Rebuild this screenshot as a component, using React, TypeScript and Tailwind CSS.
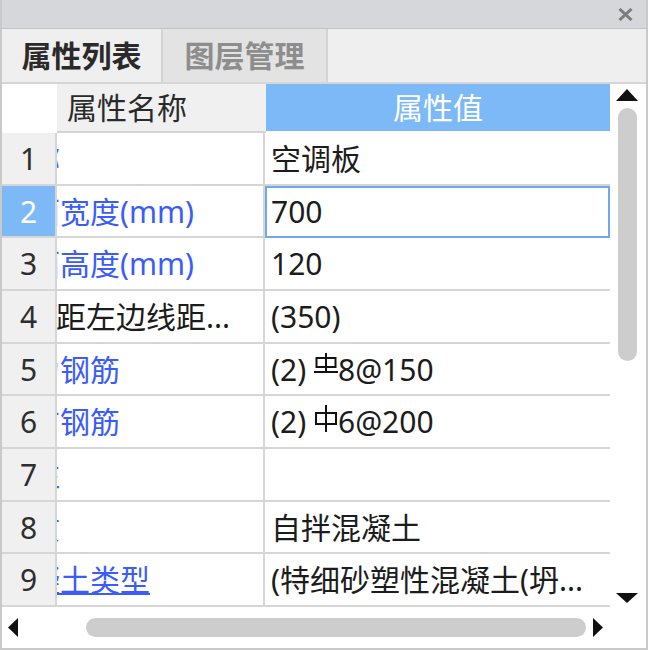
import type { ReactNode } from 'react'

type Row = {
  n: number
  name: string
  shift: boolean
  blue: boolean
  link?: boolean
  value: ReactNode
  h: string
}

function Rebar3() {
  return (
    <svg width="24" height="22" viewBox="0 0 24 22" className="-translate-y-[5px]" fill="none" stroke="#111" strokeWidth="2">
      <path d="M12 0V19" />
      <rect x="2.5" y="5" width="19" height="9" />
      <path d="M0 19H24" />
    </svg>
  )
}

function Rebar1() {
  return (
    <svg width="24" height="27" viewBox="0 0 24 27" className="-translate-y-[3px]" fill="none" stroke="#111" strokeWidth="2">
      <path d="M12 0V27" />
      <rect x="2" y="8" width="20" height="11" />
    </svg>
  )
}

const rows: Row[] = [
  { n: 1, name: '名称', shift: true, blue: true, value: '空调板', h: 'h-[53px]' },
  { n: 2, name: '截面宽度(mm)', shift: true, blue: true, value: '700', h: 'h-[52px]' },
  { n: 3, name: '截面高度(mm)', shift: true, blue: true, value: '120', h: 'h-[53px]' },
  { n: 4, name: '距左边线距...', shift: false, blue: false, value: '(350)', h: 'h-[53px]' },
  {
    n: 5,
    name: '受力钢筋',
    shift: true,
    blue: true,
    value: (
      <>
        <span>(2)&nbsp;</span>
        <Rebar3 />
        <span>8@150</span>
      </>
    ),
    h: 'h-[52px]',
  },
  {
    n: 6,
    name: '分布钢筋',
    shift: true,
    blue: true,
    value: (
      <>
        <span>(2)&nbsp;</span>
        <Rebar1 />
        <span>6@200</span>
      </>
    ),
    h: 'h-[53px]',
  },
  { n: 7, name: '备注', shift: true, blue: true, value: '', h: 'h-[53px]' },
  { n: 8, name: '材质', shift: true, blue: true, value: '自拌混凝土', h: 'h-[52px]' },
  { n: 9, name: '混凝土类型', shift: true, blue: true, link: true, value: '(特细砂塑性混凝土(坍...', h: 'h-[53px]' },
]

export default function App() {
  return (
    <div className="w-[648px] h-[650px] bg-white border-x-2 border-b-2 border-[#c9c9c9] flex flex-col overflow-hidden font-['Noto_Sans','Noto_Sans_CJK_SC',sans-serif] text-[#1c1c1c]">
      {/* title bar */}
      <div className="h-[29px] shrink-0 bg-[#d6d7db] border-b border-[#c2c3c7] flex items-center justify-end pr-[13px]">
        <svg width="15" height="13" viewBox="0 0 15 13" stroke="#7c7c7c" strokeWidth="3">
          <path d="M1.5 1L13.5 12M13.5 1L1.5 12" />
        </svg>
      </div>

      {/* tabs */}
      <div className="h-[55px] shrink-0 bg-[#efefef] border-b-2 border-[#d6d6d6] flex">
        <div className="w-[161px] border-r-2 border-[#d3d3d3] flex items-center justify-center text-[30px] font-bold text-[#2a2a2a]">
          属性列表
        </div>
        <div className="w-[165px] bg-[#e3e3e3] border-r-2 border-[#d3d3d3] flex items-center justify-center text-[30px] font-bold text-[#8d8d8d]">
          图层管理
        </div>
      </div>

      {/* grid + vertical scrollbar */}
      <div className="h-[523px] shrink-0 flex">
        <div className="w-[608px] flex flex-col overflow-hidden">
          <div className="h-[49px] shrink-0 flex">
            <div className="w-[55px] bg-white" />
            <div className="w-[209px] bg-[#f0f0f0] border-b-2 border-[#d4d4d4] flex items-center pl-[10px] text-[30px] text-[#2a2a2a]">
              属性名称
            </div>
            <div className="w-[344px] h-[47px] bg-[#7db9f7] flex items-center justify-center text-[30px] text-white">
              属性值
            </div>
          </div>

          {rows.map((r) => {
            const sel = r.n === 2
            return (
              <div key={r.n} className={`${r.h} shrink-0 flex`}>
                <div
                  className={`w-[55px] border-r-2 border-b-2 border-[#d6d6d6] flex items-center justify-center text-[30px] ${
                    sel ? 'bg-[#7db9f7] text-white' : 'bg-[#f0f0f0] text-[#2e2e2e]'
                  }`}
                >
                  {r.n}
                </div>
                <div className="w-[208px] border-r-2 border-b-2 border-[#d6d6d6] overflow-hidden flex items-center whitespace-nowrap text-[30px]">
                  <span
                    className={`${r.shift ? '-ml-[57px]' : '-ml-[1px]'} ${r.blue ? 'text-[#3a5cfb]' : 'text-[#1c1c1c]'} ${
                      r.link ? 'underline underline-offset-[2px] decoration-2' : ''
                    }`}
                  >
                    {r.name}
                  </span>
                </div>
                <div
                  className={`w-[345px] border-b-2 border-[#d6d6d6] flex items-center whitespace-nowrap overflow-hidden text-[30px] ${
                    sel ? 'pl-[6px] outline-2 -outline-offset-2 outline-[#6ea8ee]' : 'pl-[6px]'
                  }`}
                >
                  {r.value}
                </div>
              </div>
            )
          })}
        </div>

        <div className="w-[36px] flex flex-col items-center pt-[5px] pb-[4px] bg-white">
          <svg width="22" height="12" viewBox="0 0 22 12" className="-translate-x-[1px]">
            <path d="M11 0L22 12H0Z" fill="#111" />
          </svg>
          <div className="mt-[7px] w-[19px] h-[253px] rounded-full bg-[#cdcdcd] -translate-x-[1px]" />
          <div className="flex-1" />
          <svg width="22" height="10" viewBox="0 0 22 10" className="-translate-x-[1px]">
            <path d="M0 0H22L11 10Z" fill="#111" />
          </svg>
        </div>
      </div>

      {/* horizontal scrollbar */}
      <div className="h-[41px] shrink-0 flex items-center pl-[6px] bg-white">
        <svg width="10" height="19" viewBox="0 0 10 19">
          <path d="M10 0V19L0 9.5Z" fill="#111" />
        </svg>
        <div className="ml-[68px] w-[500px] h-[19px] rounded-full bg-[#cdcdcd]" />
        <svg width="10" height="19" viewBox="0 0 10 19" className="ml-[7px]">
          <path d="M0 0V19L10 9.5Z" fill="#111" />
        </svg>
      </div>
    </div>
  )
}
